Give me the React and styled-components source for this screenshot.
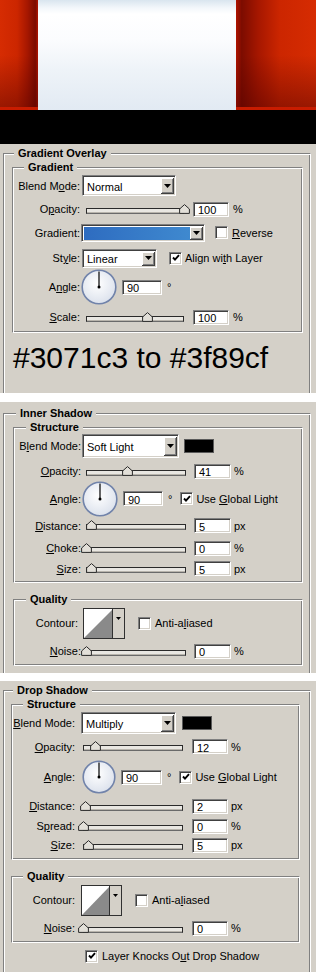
import React from 'react';
import styled, { createGlobalStyle } from 'styled-components';

const GRAY = '#d4d0c8';

const GlobalStyle = createGlobalStyle`
  html, body {
    margin: 0;
    padding: 0;
    background: ${GRAY};
  }
  body {
    width: 316px;
    font-family: "Liberation Sans", Arial, sans-serif;
    font-size: 11px;
    color: #000;
  }
`;

const Page = styled.div`
  width: 316px;
  display: flex;
  flex-direction: column;
`;

/* ---------- top preview ---------- */

const Hero = styled.div`
  display: flex;
  height: 110px;
`;

const RedWing = styled.div`
  width: ${p => p.$w}px;
  flex: none;
  background:
    linear-gradient(to top, #c81c00 0, #c81c00 3px, transparent 3px),
    linear-gradient(to bottom, rgba(80, 0, 0, 0) 50%, rgba(80, 0, 0, 0.45) 97%),
    linear-gradient(to ${p => p.$dir}, #d62c02 0%, #cc2600 45%, #a61700 72%, #7c0c00 93%, #b01400 100%);
`;

const Glass = styled.div`
  flex: 1;
  background: linear-gradient(to bottom, #d9e5ef 0px, #f3f7fb 8px, #ffffff 14px, #fbfcfe 40px, #eef3f8 70px, #e2eaf3 110px);
`;

const BlackBand = styled.div`
  height: 34px;
  background: #000;
`;

const Gap = styled.div`
  height: ${p => p.$h}px;
  background: #fff;
`;

/* ---------- dialog panels ---------- */

const Panel = styled.section`
  height: ${p => p.$h}px;
  box-sizing: border-box;
  padding: ${p => p.$pt}px 5px 0 3px;
  background: ${GRAY};
  display: flex;
  flex-direction: column;
  overflow: hidden;
`;

const Outer = styled.fieldset`
  flex: 1;
  margin: 0;
  min-inline-size: 0;
  padding: 0 ${p => p.$pr}px 0 ${p => p.$pl}px;
  border: 1px solid #808080;
  border-right-color: #fff;
  border-bottom: none;
  box-shadow: inset 1px 1px 0 #fff, inset -1px 0 0 #808080;
`;

const Group = styled.fieldset`
  margin: ${p => p.$mt || 0}px 0 0 0;
  min-inline-size: 0;
  padding: 0 0 ${p => p.$pb || 0}px 0;
  border: 1px solid #808080;
  border-right-color: #fff;
  border-bottom-color: #fff;
  box-shadow: inset 1px 1px 0 #fff, inset -1px -1px 0 #808080;
`;

const Legend = styled.legend`
  margin-left: ${p => p.$ml}px;
  padding: 0 4px;
  font-weight: bold;
  line-height: 14px;
  background: ${GRAY};
`;

const Row = styled.div`
  display: flex;
  align-items: center;
  height: ${p => p.$h}px;
  white-space: nowrap;
`;

const Label = styled.span`
  flex: none;
  width: ${p => p.$w}px;
  text-align: right;
`;

const Text = styled.span`
  flex: none;
  margin-left: ${p => p.$ml || 0}px;
`;

const U = styled.span`
  text-decoration: underline;
  text-underline-offset: 1px;
`;

const sunken = `
  box-sizing: border-box;
  background: #fff;
  border: 1px solid;
  border-color: #808080 #fff #fff #808080;
  box-shadow: inset 1px 1px 0 #404040, inset -1px -1px 0 ${GRAY};
`;

const SelectBox = styled.div`
  ${sunken}
  flex: none;
  display: flex;
  margin-left: ${p => p.$ml}px;
  width: ${p => p.$w}px;
  height: ${p => p.$h}px;
  padding: 2px 1px 1px 2px;
`;

const SelectText = styled.span`
  flex: 1;
  display: flex;
  align-items: center;
  padding: 1px 0 0 2px;
`;

const DropBtn = styled.span`
  flex: none;
  width: 13px;
  box-sizing: border-box;
  display: flex;
  align-items: center;
  justify-content: center;
  background: ${GRAY};
  border-right: 1px solid #404040;
  border-bottom: 1px solid #404040;
  box-shadow: inset 1px 1px 0 #fff, inset -1px -1px 0 #808080;
`;

const NumBox = styled.span`
  ${sunken}
  flex: none;
  display: flex;
  align-items: center;
  margin-left: ${p => p.$ml}px;
  width: ${p => p.$w}px;
  height: 15px;
  padding: 2px 0 0 4px;
`;

const GradientBox = styled.div`
  ${sunken}
  flex: none;
  display: flex;
  margin-left: ${p => p.$ml}px;
  width: ${p => p.$w}px;
  height: 18px;
  padding: 2px 1px 1px 2px;
`;

const GradientFill = styled.span`
  flex: 1;
  background: linear-gradient(to right, #2e6cc0, #3f89cf);
`;

const ColorChip = styled.span`
  flex: none;
  margin-left: ${p => p.$ml}px;
  width: 30px;
  height: 14px;
  box-sizing: border-box;
  background: #000;
  border: 1px solid #5a5a5a;
`;

const CheckBox = styled.span`
  ${sunken}
  flex: none;
  margin-left: ${p => p.$ml}px;
  width: 13px;
  height: 13px;
  display: flex;
  align-items: center;
  justify-content: center;
`;

const SliderWrap = styled.div`
  position: relative;
  flex: none;
  margin-left: ${p => p.$ml}px;
  width: ${p => p.$w}px;
  height: 11px;
  display: flex;
  align-items: flex-end;
`;

const Track = styled.div`
  flex: 1;
  height: 6px;
  margin-bottom: 1px;
  box-sizing: border-box;
  border: 1px solid #2a2a2a;
  border-bottom-color: #6a6a6a;
  background: #e9e7e2;
  box-shadow: inset 0 -1px 0 #b8b4ac;
`;

const Thumb = styled.svg`
  position: absolute;
  top: 0;
`;

const DialSvg = styled.svg`
  flex: none;
  margin-left: ${p => p.$ml}px;
`;

const ContourSvg = styled.svg`
  flex: none;
  margin-left: ${p => p.$ml}px;
`;

const BigText = styled.div`
  margin: 8px 0 0 1px;
  font-family: "Liberation Sans", Arial, sans-serif;
  font-size: 30px;
  line-height: 34px;
  white-space: nowrap;
`;

/* ---------- small widgets ---------- */

const Arrow = () => (
  <svg width="7" height="4" viewBox="0 0 7 4">
    <path d="M0 0 H7 L3.5 4 Z" fill="#000" />
  </svg>
);

const Select = ({ ml, w, h = 21, children }) => (
  <SelectBox $ml={ml} $w={w} $h={h}>
    <SelectText>{children}</SelectText>
    <DropBtn><Arrow /></DropBtn>
  </SelectBox>
);

const Check = ({ ml, on }) => (
  <CheckBox $ml={ml}>
    {on && (
      <svg width="8" height="8" viewBox="0 0 8 8">
        <path d="M1 3.5 L3 5.7 L7 1.2" fill="none" stroke="#000" strokeWidth="1.9" />
      </svg>
    )}
  </CheckBox>
);

const Slider = ({ ml, w, pct }) => (
  <SliderWrap $ml={ml} $w={w}>
    <Track />
    <Thumb width="11" height="10" viewBox="0 0 11 10" style={{ left: Math.round((w * pct) / 100) - 5 }}>
      <path d="M5.5 0.6 L10.4 5 V9.4 H0.6 V5 Z" fill="#e2dfd8" stroke="#2a2a2a" strokeWidth="1" />
    </Thumb>
  </SliderWrap>
);

const Dial = ({ ml, size, id }) => {
  const r = size / 2;
  return (
    <DialSvg $ml={ml} width={size} height={size} viewBox={`0 0 ${size} ${size}`}>
      <defs>
        <radialGradient id={id} cx="45%" cy="40%" r="62%">
          <stop offset="0" stopColor="#ffffff" />
          <stop offset="1" stopColor="#dbe1ec" />
        </radialGradient>
      </defs>
      <circle cx={r} cy={r} r={r - 1.2} fill={`url(#${id})`} stroke="#7183aa" strokeWidth="1.6" />
      <line x1={r} y1={r} x2={r} y2={2.5} stroke="#000" strokeWidth="1.2" />
      <circle cx={r} cy={r} r="1.5" fill="#000" />
    </DialSvg>
  );
};

const Contour = ({ ml, w, h }) => (
  <ContourSvg $ml={ml} width={w} height={h} viewBox={`0 0 ${w} ${h}`}>
    <rect x="0.5" y="0.5" width={w - 1} height={h - 1} fill="#fff" stroke="#303030" />
    <path d={`M1 ${h - 1} L${w - 12} 1 V${h - 1} Z`} fill="#8a8a8a" />
    <rect x={w - 12} y="1" width="11" height={h - 2} fill={GRAY} />
    <line x1={w - 12.5} y1="1" x2={w - 12.5} y2={h - 1} stroke="#303030" />
    <path d={`M${w - 9} 9 H${w - 4} L${w - 6.5} 12 Z`} fill="#000" />
  </ContourSvg>
);

const SliderRow = ({ h, m, label, pct, value, unit }) => (
  <Row $h={h}>
    <Label $w={m.lw}>{label}</Label>
    <Slider ml={m.sl} w={m.sw} pct={pct} />
    <NumBox $ml={m.il} $w={m.iw}>{value}</NumBox>
    <Text $ml={m.ul}>{unit}</Text>
  </Row>
);

const G = { lw: 67, sl: 6, sw: 98, il: 9, iw: 36, ul: 4 };
const I = { lw: 67, sl: 5, sw: 100, il: 8, iw: 37, ul: 3 };
const D = { lw: 63, sl: 8, sw: 100, il: 9, iw: 36, ul: 3 };

export default function App() {
  return (
    <>
      <GlobalStyle />
      <Page>
        <Hero>
          <RedWing $w={38} $dir="right" />
          <Glass />
          <RedWing $w={80} $dir="left" />
        </Hero>
        <BlackBand />

        {/* Gradient Overlay */}
        <Panel $h={249} $pt={2}>
          <Outer $pl={8} $pr={7}>
            <Legend $ml={2}>Gradient Overlay</Legend>
            <Group>
              <Legend $ml={11}>Gradient</Legend>
              <Row $h={23}>
                <Label $w={G.lw}>Blend M<U>o</U>de:</Label>
                <Select ml={2} w={94}>Normal</Select>
              </Row>
              <SliderRow h={24} m={G} label={<>O<U>p</U>acity:</>} pct={100} value="100" unit="%" />
              <Row $h={23}>
                <Label $w={G.lw}>Gradient:</Label>
                <GradientBox $ml={1} $w={124}>
                  <GradientFill />
                  <DropBtn><Arrow /></DropBtn>
                </GradientBox>
                <Check ml={10} />
                <Text $ml={4}><U>R</U>everse</Text>
              </Row>
              <Row $h={28}>
                <Label $w={G.lw}>St<U>y</U>le:</Label>
                <Select ml={2} w={75} h={19}>Linear</Select>
                <Check ml={12} on />
                <Text $ml={3}>Align wi<U>t</U>h Layer</Text>
              </Row>
              <Row $h={30}>
                <Label $w={G.lw}>A<U>n</U>gle:</Label>
                <Dial ml={1} size={36} id="dialA" />
                <NumBox $ml={5} $w={40}>90</NumBox>
                <Text $ml={5}>°</Text>
              </Row>
              <SliderRow h={30} m={G} label={<><U>S</U>cale:</>} pct={62} value="100" unit="%" />
            </Group>
            <BigText>#3071c3 to #3f89cf</BigText>
          </Outer>
        </Panel>

        <Gap $h={9} />

        {/* Inner Shadow */}
        <Panel $h={271} $pt={4}>
          <Outer $pl={9} $pr={7}>
            <Legend $ml={3}>Inner Shadow</Legend>
            <Group $pb={3}>
              <Legend $ml={12}>Structure</Legend>
              <Row $h={24}>
                <Label $w={I.lw}>B<U>l</U>end Mode:</Label>
                <Select ml={1} w={97} h={24}>Soft Light</Select>
                <ColorChip $ml={5} />
              </Row>
              <SliderRow h={26} m={I} label={<><U>O</U>pacity:</>} pct={41} value="41" unit="%" />
              <Row $h={29}>
                <Label $w={I.lw}><U>A</U>ngle:</Label>
                <Dial ml={1} size={36} id="dialB" />
                <NumBox $ml={5} $w={40}>90</NumBox>
                <Text $ml={5}>°</Text>
                <Check ml={8} on />
                <Text $ml={3}>Use <U>G</U>lobal Light</Text>
              </Row>
              <SliderRow h={25} m={I} label={<><U>D</U>istance:</>} pct={5} value="5" unit="px" />
              <SliderRow h={20} m={I} label={<><U>C</U>hoke:</>} pct={0} value="0" unit="%" />
              <SliderRow h={21} m={I} label={<><U>S</U>ize:</>} pct={5} value="5" unit="px" />
            </Group>
            <Group $mt={9} $pb={3}>
              <Legend $ml={12}>Quality</Legend>
              <Row $h={34}>
                <Label $w={64}>Contour:</Label>
                <Contour ml={5} w={42} h={31} />
                <Check ml={13} />
                <Text $ml={4}>Anti-a<U>l</U>iased</Text>
              </Row>
              <SliderRow h={22} m={I} label={<><U>N</U>oise:</>} pct={0} value="0" unit="%" />
            </Group>
          </Outer>
        </Panel>

        <Gap $h={8} />

        {/* Drop Shadow */}
        <Panel $h={291} $pt={2}>
          <Outer $pl={7} $pr={10}>
            <Legend $ml={2}>Drop Shadow</Legend>
            <Group $pb={4}>
              <Legend $ml={11}>Structure</Legend>
              <Row $h={23}>
                <Label $w={D.lw}><U>B</U>lend Mode:</Label>
                <Select ml={6} w={95} h={22}>Multiply</Select>
                <ColorChip $ml={6} />
              </Row>
              <SliderRow h={25} m={D} label={<><U>O</U>pacity:</>} pct={12} value="12" unit="%" />
              <Row $h={36}>
                <Label $w={D.lw}><U>A</U>ngle:</Label>
                <Dial ml={7} size={34} id="dialC" />
                <NumBox $ml={5} $w={41}>90</NumBox>
                <Text $ml={5}>°</Text>
                <Check ml={8} on />
                <Text $ml={3}>Use <U>G</U>lobal Light</Text>
              </Row>
              <SliderRow h={22} m={D} label={<><U>D</U>istance:</>} pct={2} value="2" unit="px" />
              <SliderRow h={18} m={D} label={<>S<U>p</U>read:</>} pct={0} value="0" unit="%" />
              <SliderRow h={20} m={D} label={<><U>S</U>ize:</>} pct={5} value="5" unit="px" />
            </Group>
            <Group $mt={9} $pb={3}>
              <Legend $ml={11}>Quality</Legend>
              <Row $h={34}>
                <Label $w={63}>Contour:</Label>
                <Contour ml={6} w={41} h={31} />
                <Check ml={13} />
                <Text $ml={4}>Anti-a<U>l</U>iased</Text>
              </Row>
              <SliderRow h={22} m={D} label={<><U>N</U>oise:</>} pct={0} value="0" unit="%" />
            </Group>
            <Row $h={26}>
              <Check ml={74} on />
              <Text $ml={4}>Layer Knocks O<U>u</U>t Drop Shadow</Text>
            </Row>
          </Outer>
        </Panel>
      </Page>
    </>
  );
}
